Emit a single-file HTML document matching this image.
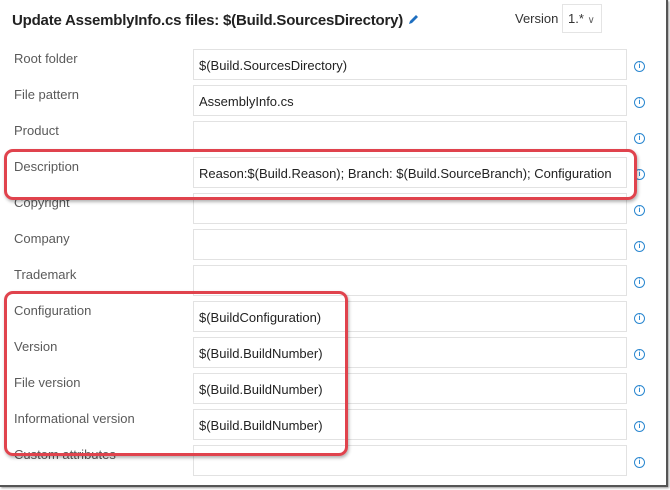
<!DOCTYPE html>
<html><head><style>
body{margin:0;width:670px;height:490px;background:#fff;font-family:"Liberation Sans",sans-serif;position:relative;overflow:hidden}
.frame{position:absolute;left:0;top:0;width:666px;height:485px;border-right:2px solid #555;border-bottom:2px solid #555;box-shadow:1px 1px 2px #999}
.title{position:absolute;left:12px;top:12px;font-size:15px;font-weight:bold;color:#222;letter-spacing:-0.2px}
.ver{position:absolute;left:515px;top:11px;font-size:13px;color:#333}
.dd{position:absolute;left:562px;top:4px;width:40px;height:29px;border:1px solid #e4e4e4;font-size:13px;color:#333;box-sizing:border-box;padding:6px 0 0 5px}
.lbl{position:absolute;left:14px;font-size:13px;color:#5a5a5a}
.inp{position:absolute;left:193px;width:434px;height:31px;border:1px solid #e2e2e2;box-sizing:border-box;font-size:13px;color:#222;padding:8px 0 0 5px;white-space:nowrap;overflow:hidden}
.info{position:absolute;left:634px;width:11px;height:11px;border:1px solid #2a87d0;border-radius:50%;box-sizing:border-box;font-size:7px;color:#2a87d0;text-align:center;line-height:9px;font-weight:bold}
.red{position:absolute;border:3px solid #e0434d;border-radius:9px;box-shadow:1px 2px 3px rgba(0,0,0,.3)}
</style></head><body>
<div class="frame"></div>
<div class="title">Update AssemblyInfo.cs files: $(Build.SourcesDirectory) <svg width="13" height="13" viewBox="0 0 13 13" style="vertical-align:-1px"><path d="M2 11 L3 8 L9 2 L11 4 L5 10 Z" fill="#1e6fc0"/></svg></div>
<div class="ver">Version</div>
<div class="dd">1.* <span style="font-size:10px;color:#666">&#8744;</span></div>

<div class="lbl" style="top:51px">Root folder</div><div class="inp" style="top:49px">$(Build.SourcesDirectory)</div><div class="info" style="top:61px">i</div>
<div class="lbl" style="top:87px">File pattern</div><div class="inp" style="top:85px">AssemblyInfo.cs</div><div class="info" style="top:97px">i</div>
<div class="lbl" style="top:123px">Product</div><div class="inp" style="top:121px"></div><div class="info" style="top:133px">i</div>
<div class="lbl" style="top:159px">Description</div><div class="inp" style="top:157px">Reason:$(Build.Reason); Branch: $(Build.SourceBranch); Configuration</div><div class="info" style="top:169px">i</div>
<div class="lbl" style="top:195px">Copyright</div><div class="inp" style="top:193px"></div><div class="info" style="top:205px">i</div>
<div class="lbl" style="top:231px">Company</div><div class="inp" style="top:229px"></div><div class="info" style="top:241px">i</div>
<div class="lbl" style="top:267px">Trademark</div><div class="inp" style="top:265px"></div><div class="info" style="top:277px">i</div>
<div class="lbl" style="top:303px">Configuration</div><div class="inp" style="top:301px">$(BuildConfiguration)</div><div class="info" style="top:313px">i</div>
<div class="lbl" style="top:339px">Version</div><div class="inp" style="top:337px">$(Build.BuildNumber)</div><div class="info" style="top:349px">i</div>
<div class="lbl" style="top:375px">File version</div><div class="inp" style="top:373px">$(Build.BuildNumber)</div><div class="info" style="top:385px">i</div>
<div class="lbl" style="top:411px">Informational version</div><div class="inp" style="top:409px">$(Build.BuildNumber)</div><div class="info" style="top:421px">i</div>
<div class="lbl" style="top:447px">Custom attributes</div><div class="inp" style="top:445px"></div><div class="info" style="top:457px">i</div>

<div class="red" style="left:4px;top:149px;width:627px;height:45px"></div>
<div class="red" style="left:4px;top:291px;width:338px;height:159px"></div>
</body></html>
